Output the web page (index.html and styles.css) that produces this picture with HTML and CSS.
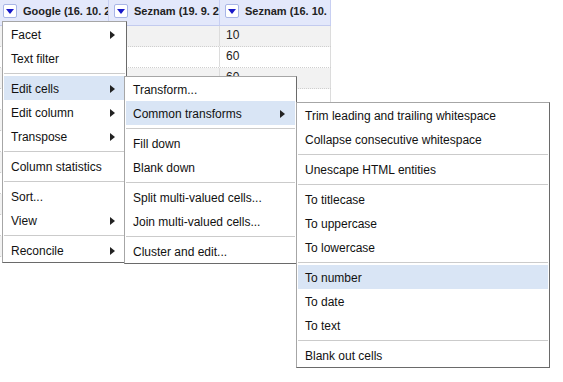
FILE: index.html
```html
<!DOCTYPE html>
<html lang="en">
<head>
    <meta charset="UTF-8">
    <title>Column menu</title>
    <link rel="stylesheet" href="styles.css">
</head>
<body>
    <div class="data-table">
        <div class="table-head">
            <div class="col-head first">
                <span class="col-button"></span>
                <span class="col-name">Google (16. 10. 2013)</span>
            </div>
            <div class="col-head">
                <span class="col-button"></span>
                <span class="col-name">Seznam (19. 9. 2013)</span>
            </div>
            <div class="col-head last">
                <span class="col-button"></span>
                <span class="col-name">Seznam (16. 10. 2013)</span>
            </div>
        </div>
        <div class="table-row odd"><div class="cell first"></div><div class="cell"></div><div class="cell last">10</div></div>
        <div class="table-row"><div class="cell first"></div><div class="cell"></div><div class="cell last">60</div></div>
        <div class="table-row odd"><div class="cell first"></div><div class="cell"></div><div class="cell last">60</div></div>
        <div class="table-row"><div class="cell first"></div><div class="cell"></div><div class="cell last"></div></div>
        <div class="table-row odd"><div class="cell first"></div><div class="cell"></div><div class="cell last"></div></div>
        <div class="table-row"><div class="cell first"></div><div class="cell"></div><div class="cell last"></div></div>
        <div class="table-row odd"><div class="cell first"></div><div class="cell"></div><div class="cell last"></div></div>
        <div class="table-row"><div class="cell first"></div><div class="cell"></div><div class="cell last"></div></div>
        <div class="table-row odd"><div class="cell first"></div><div class="cell"></div><div class="cell last"></div></div>
        <div class="table-row"><div class="cell first"></div><div class="cell"></div><div class="cell last"></div></div>
        <div class="table-row odd"><div class="cell first"></div><div class="cell"></div><div class="cell last"></div></div>
    </div>

    <!-- column menu -->
    <div class="menu menu-column">
        <div class="menu-item sub">Facet</div>
        <div class="menu-item">Text filter</div>
        <div class="menu-sep"></div>
        <div class="menu-item sub active">Edit cells</div>
        <div class="menu-item sub">Edit column</div>
        <div class="menu-item sub">Transpose</div>
        <div class="menu-sep"></div>
        <div class="menu-item">Column statistics</div>
        <div class="menu-sep"></div>
        <div class="menu-item">Sort...</div>
        <div class="menu-item sub">View</div>
        <div class="menu-sep"></div>
        <div class="menu-item sub">Reconcile</div>
    </div>

    <!-- edit cells submenu -->
    <div class="menu menu-cells">
        <div class="menu-item">Transform...</div>
        <div class="menu-item sub active">Common transforms</div>
        <div class="menu-sep"></div>
        <div class="menu-item">Fill down</div>
        <div class="menu-item">Blank down</div>
        <div class="menu-sep"></div>
        <div class="menu-item">Split multi-valued cells...</div>
        <div class="menu-item">Join multi-valued cells...</div>
        <div class="menu-sep"></div>
        <div class="menu-item">Cluster and edit...</div>
    </div>

    <!-- common transforms submenu -->
    <div class="menu menu-transforms">
        <div class="menu-item">Trim leading and trailing whitespace</div>
        <div class="menu-item">Collapse consecutive whitespace</div>
        <div class="menu-sep"></div>
        <div class="menu-item">Unescape HTML entities</div>
        <div class="menu-sep"></div>
        <div class="menu-item">To titlecase</div>
        <div class="menu-item">To uppercase</div>
        <div class="menu-item">To lowercase</div>
        <div class="menu-sep"></div>
        <div class="menu-item active">To number</div>
        <div class="menu-item">To date</div>
        <div class="menu-item">To text</div>
        <div class="menu-sep"></div>
        <div class="menu-item">Blank out cells</div>
    </div>
</body>
</html>
```

FILE: styles.css
```css
body {
    margin: 0;
    font-family: "Liberation Sans", Arial, sans-serif;
    font-size: 12px;
    color: #111;
    background-color: white;
}
.data-table {
    width: 331px;
}
.table-head {
    display: flex;
    height: 25px;
    background-color: #e3e8fb;
    border-bottom: 1px solid #c3cbef;
}
.col-head {
    display: flex;
    align-items: center;
    width: 111px;
    padding-left: 5px;
    box-sizing: border-box;
    border-right: 1px solid #c8cff2;
    overflow: hidden;
    white-space: nowrap;
}
.col-head.first {
    width: 109px;
    padding-left: 3px;
}
.col-button {
    position: relative;
    flex-shrink: 0;
    width: 12px;
    height: 12px;
    margin-top: -3px;
    background-color: white;
    border: 1px solid #a9b6e6;
    border-radius: 2px;
}
.col-button::after {
    content: "";
    position: absolute;
    left: 2px;
    top: 4px;
    border-left: 4px solid transparent;
    border-right: 4px solid transparent;
    border-top: 5px solid #1a1ac8;
}
.col-name {
    margin-left: 6px;
    margin-top: -3px;
    font-size: 11px;
    font-weight: bold;
    color: #222;
}
.table-row {
    display: flex;
    height: 20px;
    border-bottom: 1px dotted #cfcfcf;
}
.table-row.odd {
    background-color: #f2f2f2;
}
.cell {
    width: 111px;
    padding-left: 6px;
    box-sizing: border-box;
    border-right: 1px solid #dcdcdc;
    line-height: 18px;
    color: #222;
}
.cell.first {
    width: 109px;
}
.menu {
    position: absolute;
    padding: 0 1px;
    background-color: white;
    border: 1px solid #a6a6a6;
    border-right-color: #6a6a6a;
    border-bottom-color: #6a6a6a;
}
.menu-column {
    left: 2px;
    top: 21px;
    width: 121px;
}
.menu-cells {
    left: 124px;
    top: 76px;
    width: 169px;
}
.menu-transforms {
    left: 296px;
    top: 102px;
    width: 250px;
}
.menu-item {
    display: flex;
    align-items: center;
    justify-content: space-between;
    height: 24px;
    padding: 1px 10px 0 7px;
    box-sizing: border-box;
    white-space: nowrap;
}
.menu-item.active {
    background-color: #d9e5f5;
}
.menu-item.sub::after {
    content: "";
    border-top: 4px solid transparent;
    border-bottom: 4px solid transparent;
    border-left: 5px solid #222;
}
.menu-sep {
    height: 1px;
    margin: 3px 0 2px;
    background-color: #cbcbcb;
}
```
